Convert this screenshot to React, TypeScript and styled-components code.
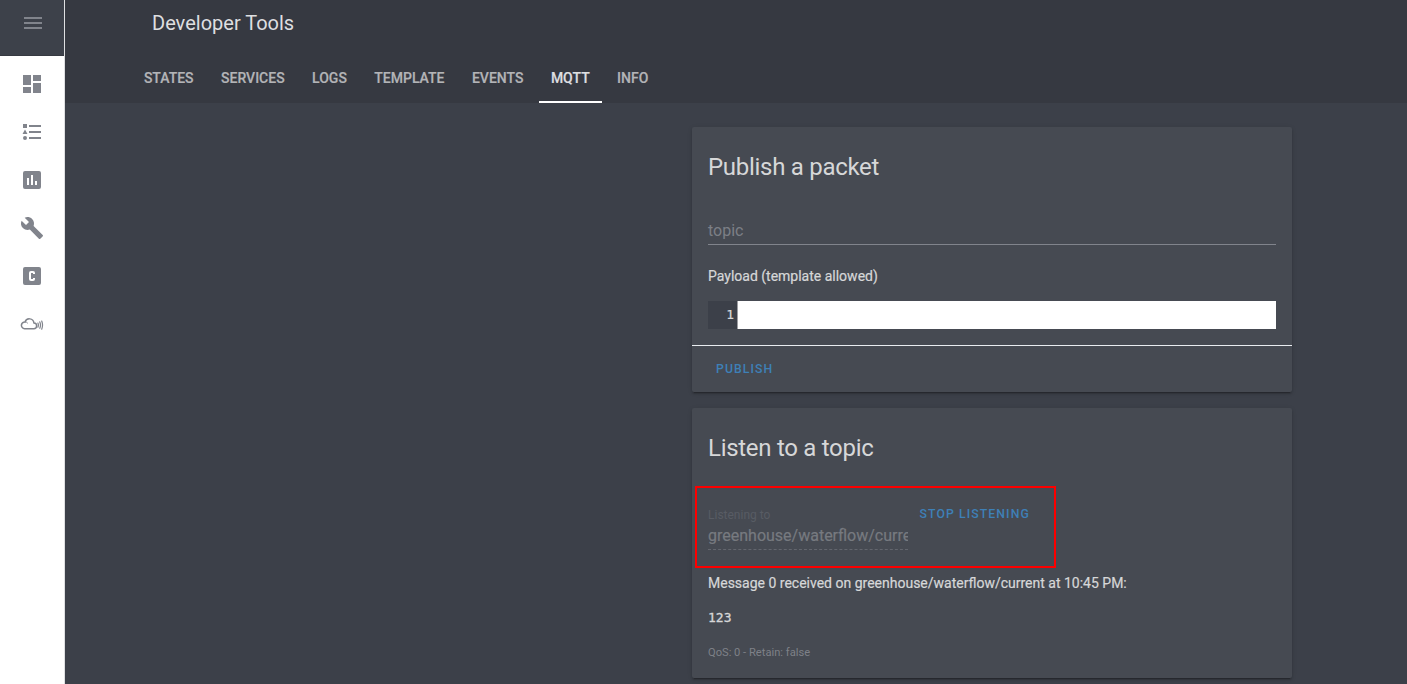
import React from "react";
import styled, { createGlobalStyle } from "styled-components";

const GlobalStyle = createGlobalStyle`
  *, *::before, *::after { box-sizing: border-box; }
  body {
    margin: 0;
    height: 684px;
    overflow: hidden;
    background: #3c4049;
    color: #d6d7d8;
    font-family: Roboto, "Liberation Sans", sans-serif;
    font-size: 14px;
  }
`;

const Shell = styled.div`
  display: flex;
  height: 684px;
`;

const Sidebar = styled.aside`
  flex: 0 0 65px;
  background: #fff;
  border-right: 1px solid #dfe0e2;
`;

const SidebarTop = styled.div`
  height: 56px;
  padding: 11px 0 0 21px;
  background: #3d414a;
  border-bottom: 1px solid #363941;
`;

const SidebarNav = styled.nav`
  display: flex;
  flex-direction: column;
  gap: 24px;
  padding: 16px 0 0 20px;
`;

const Icon = styled.svg`
  display: block;
  width: 24px;
  height: 24px;
  fill: #81848c;
`;

const Main = styled.main`
  flex: 1;
  min-width: 0;
`;

const Header = styled.header`
  height: 103px;
  display: flex;
  flex-direction: column;
  justify-content: space-between;
  background: #363941;
`;

const PageTitle = styled.div`
  padding: 11px 0 0 87px;
  font-size: 20px;
  line-height: 24px;
  color: #dedfe0;
`;

const Tabs = styled.div`
  display: flex;
  gap: 3.45px;
  padding-left: 66.9px;
`;

const Tab = styled.div<{ $active?: boolean }>`
  height: 50px;
  padding: 0 12px;
  line-height: 50px;
  font-weight: 500;
  color: ${(p) => (p.$active ? "#dedfe0" : "#b3b4b7")};
  box-shadow: ${(p) => (p.$active ? "inset 0 -2px #fff" : "none")};
  -webkit-text-stroke: 0.2px currentColor;
`;

const Content = styled.div`
  display: flex;
  flex-direction: column;
  gap: 16px;
  width: 600px;
  margin: 24px 0 0 627px;
`;

const Card = styled.section<{ $height: number }>`
  position: relative;
  height: ${(p) => p.$height}px;
  border-radius: 2px;
  background: #464a52;
  box-shadow: 0 2px 2px rgba(0, 0, 0, 0.14), 0 1px 5px rgba(0, 0, 0, 0.12),
    0 3px 1px -2px rgba(0, 0, 0, 0.2);
`;

const CardTitle = styled.h1`
  margin: 0;
  padding: 24px 16px 0;
  font-size: 24px;
  font-weight: 400;
  line-height: 32px;
  letter-spacing: -0.288px;
`;

const CardBody = styled.div`
  padding: 0 16px;
`;

const TopicField = styled.div`
  margin-top: 35px;
  height: 27px;
  border-bottom: 1px solid #81848c;
  font-size: 16px;
  line-height: 26px;
  color: #7c7f86;
`;

const FieldLabel = styled.div`
  margin-top: 21px;
  line-height: 20px;
  -webkit-text-stroke: 0.2px currentColor;
`;

const Editor = styled.div`
  display: flex;
  height: 28px;
  margin-top: 15px;
  background: #fff;
`;

const Gutter = styled.div`
  width: 30px;
  padding-right: 3px;
  border-right: 1px solid #9c9da1;
  background: #3c4049;
  font-family: "DejaVu Sans Mono", monospace;
  font-size: 13px;
  line-height: 28px;
  text-align: right;
  -webkit-text-stroke: 0.2px currentColor;
`;

const Actions = styled.div`
  height: 47px;
  margin-top: 16px;
  padding: 0 24px;
  border-top: 1px solid #e9ecf0;
`;

const TextButton = styled.button`
  display: block;
  padding: 0;
  border: 0;
  background: none;
  color: #3e80b7;
  font: 500 12.25px/46px Roboto, sans-serif;
  letter-spacing: 1.09px;
  white-space: nowrap;
`;

const ListenRow = styled.div`
  display: flex;
  gap: 11.5px;
  margin-top: 23px;
`;

const ListenField = styled.div`
  width: 200px;
  padding-top: 18px;
`;

const FloatingLabel = styled.div`
  font-size: 12px;
  line-height: 20px;
  color: #585c64;
`;

const ListenValue = styled.div`
  height: 25px;
  overflow: hidden;
  border-bottom: 1px dashed #63666e;
  font-size: 16px;
  line-height: 21px;
  color: #777a80;
  white-space: nowrap;
  -webkit-text-stroke: 0.2px currentColor;
`;

const ListenAction = styled.div`
  padding-top: 4px;
`;

const Message = styled.div`
  margin-top: 23px;
  line-height: 20px;
  -webkit-text-stroke: 0.2px currentColor;
`;

const Payload = styled.pre`
  margin: 15px 0 0;
  font-family: "DejaVu Sans Mono", monospace;
  font-size: 13px;
  line-height: 20px;
  -webkit-text-stroke: 0.3px currentColor;
`;

const Meta = styled.div`
  margin-top: 17px;
  font-size: 11.15px;
  line-height: 16px;
  color: #7e8188;
`;

const Highlight = styled.div`
  position: absolute;
  top: 78px;
  left: 3px;
  width: 361px;
  height: 82px;
  border: 2px solid #fe0000;
`;

const box =
  "M5,3H19A2,2 0 0,1 21,5V19A2,2 0 0,1 19,21H5A2,2 0 0,1 3,19V5A2,2 0 0,1 5,3Z";

const navIcons = [
  "M13,3V9H21V3M13,21H21V11H13M3,21H11V15H3M3,13H11V3H3V13Z",
  "M5,9.5L7.5,14H2.5L5,9.5M3,4H7V8H3V4M5,20A2,2 0 0,0 7,18A2,2 0 0,0 5,16A2,2 0 0,0 3,18A2,2 0 0,0 5,20M9,5V7H21V5H9M9,19H21V17H9V19M9,13H21V11H9V13Z",
  box + "M7,10V17H9V10ZM11,7V17H13V7ZM15,13V17H17V13Z",
  "M22.7,19L13.6,9.9C14.5,7.6 14,4.9 12.1,3C10.1,1 7.1,0.6 4.7,1.7L9,6L6,9L1.6,4.7C0.4,7.1 0.9,10.1 2.9,12.1C4.8,14 7.5,14.5 9.8,13.6L18.9,22.7C19.3,23.1 19.9,23.1 20.3,22.7L22.6,20.4C23.1,20 23.1,19.3 22.7,19Z",
  box +
    "M11,7A2,2 0 0,0 9,9V15A2,2 0 0,0 11,17H13A2,2 0 0,0 15,15V14H13V15H11V9H13V10H15V9A2,2 0 0,0 13,7Z",
];

const tabs = ["STATES", "SERVICES", "LOGS", "TEMPLATE", "EVENTS", "MQTT", "INFO"];

const CloudIcon = () => (
  <Icon viewBox="0 0 24 24">
    <g fill="none" stroke="#81848c" strokeLinecap="round">
      <path
        strokeWidth="1.5"
        d="M4.6 16.7H13.6A2.9 2.9 0 0 0 13.9 10.9A4.6 4.6 0 0 0 5 9.9A3.4 3.4 0 0 0 4.6 16.7Z"
      />
      <path strokeWidth="0.9" d="M5.2 9.9Q6.8 9.9 7.6 11" />
      <path
        strokeWidth="1.2"
        d="M17.9 11Q18.9 13.1 17.9 15.2M19.8 9.9Q21.2 13.1 19.8 16.3M21.7 9Q23.4 13.1 21.7 17.2"
      />
    </g>
  </Icon>
);

export default function App() {
  return (
    <>
      <GlobalStyle />
      <Shell>
        <Sidebar>
          <SidebarTop>
            <Icon viewBox="0 0 24 24">
              <path d="M3,6H21V8H3V6M3,11H21V13H3V11M3,16H21V18H3V16Z" />
            </Icon>
          </SidebarTop>
          <SidebarNav>
            {navIcons.map((d) => (
              <Icon key={d} viewBox="0 0 24 24">
                <path fillRule="evenodd" d={d} />
              </Icon>
            ))}
            <CloudIcon />
          </SidebarNav>
        </Sidebar>
        <Main>
          <Header>
            <PageTitle>Developer Tools</PageTitle>
            <Tabs>
              {tabs.map((t) => (
                <Tab key={t} $active={t === "MQTT"}>
                  {t}
                </Tab>
              ))}
            </Tabs>
          </Header>
          <Content>
            <Card $height={265}>
              <CardTitle>Publish a packet</CardTitle>
              <CardBody>
                <TopicField>topic</TopicField>
                <FieldLabel>Payload (template allowed)</FieldLabel>
                <Editor>
                  <Gutter>1</Gutter>
                </Editor>
              </CardBody>
              <Actions>
                <TextButton>PUBLISH</TextButton>
              </Actions>
            </Card>
            <Card $height={270}>
              <CardTitle>Listen to a topic</CardTitle>
              <CardBody>
                <ListenRow>
                  <ListenField>
                    <FloatingLabel>Listening to</FloatingLabel>
                    <ListenValue>greenhouse/waterflow/current</ListenValue>
                  </ListenField>
                  <ListenAction>
                    <TextButton>STOP LISTENING</TextButton>
                  </ListenAction>
                </ListenRow>
                <Message>
                  Message 0 received on greenhouse/waterflow/current at 10:45 PM:
                </Message>
                <Payload>123</Payload>
                <Meta>QoS: 0 - Retain: false</Meta>
              </CardBody>
              <Highlight />
            </Card>
          </Content>
        </Main>
      </Shell>
    </>
  );
}
